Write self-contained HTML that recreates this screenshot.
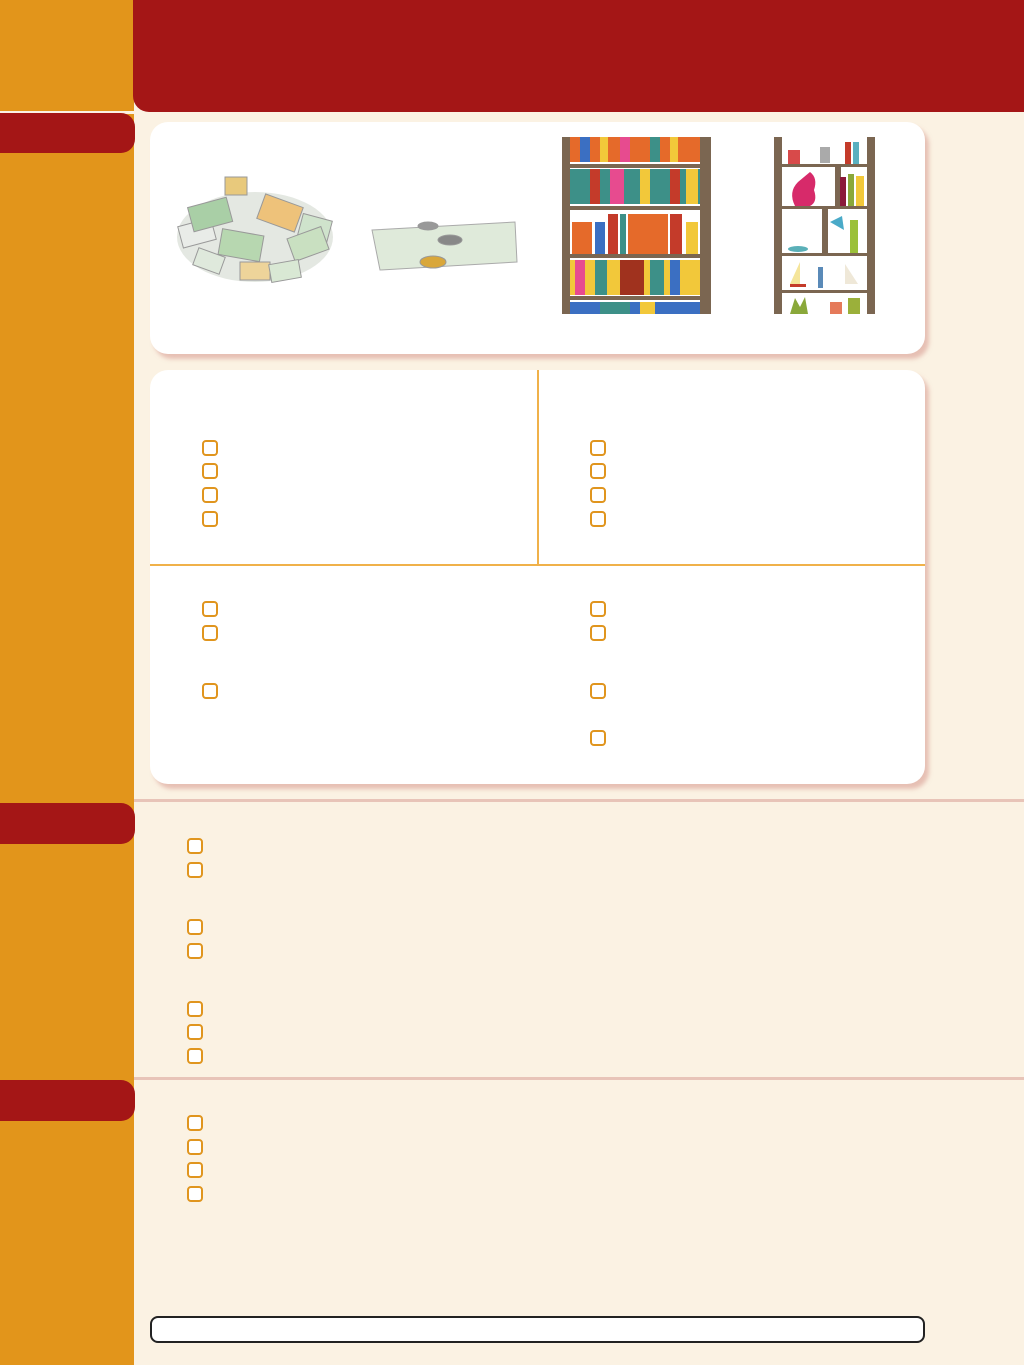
<!DOCTYPE html>
<html><head><meta charset="utf-8"><style>
body{margin:0;width:1024px;height:1365px;background:#fbf2e3;position:relative;overflow:hidden;font-family:"Liberation Sans",sans-serif}
.a{position:absolute}
.cb{position:absolute;width:12px;height:12px;border:2px solid #e0951e;border-radius:4px;background:#fff}
.card{position:absolute;background:#fff;border-radius:18px;box-shadow:4px 5px 4px rgba(214,150,140,.55)}
.sep{position:absolute;left:134px;width:890px;height:3px;background:#e8c4b8}
</style></head><body>
<div class="a" style="left:0;top:0;width:134px;height:1365px;background:#e2951b"></div>
<div class="a" style="left:133px;top:0;width:891px;height:112px;background:#a41616;border-bottom-left-radius:16px"></div>
<div class="a" style="left:0;top:111px;width:134px;height:3px;background:#fbf2e3"></div>
<div class="a" style="left:0;top:113px;width:135px;height:40px;background:#a41616;border-radius:0 14px 14px 0"></div>
<div class="sep" style="top:799px"></div>
<div class="a" style="left:0;top:803px;width:135px;height:41px;background:#a41616;border-radius:0 14px 14px 0"></div>
<div class="sep" style="top:1077px"></div>
<div class="a" style="left:0;top:1080px;width:135px;height:41px;background:#a41616;border-radius:0 14px 14px 0"></div>

<div class="card" style="left:150px;top:122px;width:775px;height:232px"></div>
<svg class="a" style="left:150px;top:122px" width="775" height="232">
<g stroke="#999" stroke-width="1">
<ellipse cx="105" cy="115" rx="78" ry="45" fill="#e4e8e2" stroke="none"/>
<rect x="30" y="100" width="34" height="22" fill="#e9ece8" transform="rotate(-15 47 111)"/>
<rect x="150" y="95" width="30" height="22" fill="#cfe3cc" transform="rotate(15 165 106)"/>
<rect x="40" y="80" width="40" height="25" fill="#a9cfa6" transform="rotate(-15 60 92)"/>
<rect x="110" y="78" width="40" height="26" fill="#eec27a" transform="rotate(20 130 91)"/>
<rect x="70" y="110" width="42" height="26" fill="#b7d7b0" transform="rotate(10 90 123)"/>
<rect x="140" y="110" width="36" height="24" fill="#c9e0c1" transform="rotate(-20 158 122)"/>
<rect x="75" y="55" width="22" height="18" fill="#e8c97c"/>
<rect x="90" y="140" width="30" height="18" fill="#eed49a"/>
<rect x="45" y="130" width="28" height="18" fill="#dfe9dc" transform="rotate(20 59 139)"/>
<rect x="120" y="140" width="30" height="18" fill="#d9e8d4" transform="rotate(-10 135 149)"/>
<polygon points="222,108 365,100 367,140 230,148" fill="#dfeada" stroke="#aaa"/>
<ellipse cx="278" cy="104" rx="10" ry="4" fill="#999"/>
<ellipse cx="300" cy="118" rx="12" ry="5" fill="#888"/>
<ellipse cx="283" cy="140" rx="13" ry="6" fill="#d9a73a"/>
</g>
<rect x="412" y="15" width="149" height="177" fill="#7b6651"/>
<rect x="420" y="15" width="130" height="177" fill="#fff"/>
<g>
<rect x="420" y="15" width="130" height="25" fill="#e56a2a"/><rect x="430" y="15" width="10" height="25" fill="#3b6fc2"/><rect x="450" y="15" width="8" height="25" fill="#f2c83a"/><rect x="470" y="15" width="10" height="25" fill="#e74b8f"/><rect x="500" y="15" width="10" height="25" fill="#3d9088"/><rect x="520" y="15" width="8" height="25" fill="#f2c83a"/>
<rect x="420" y="47" width="130" height="35" fill="#3d9088"/><rect x="440" y="47" width="10" height="35" fill="#c43b2a"/><rect x="460" y="47" width="14" height="35" fill="#e74b8f"/><rect x="490" y="47" width="10" height="35" fill="#f2c83a"/><rect x="520" y="47" width="10" height="35" fill="#c43b2a"/><rect x="536" y="47" width="12" height="35" fill="#f2c83a"/>
<rect x="420" y="92" width="130" height="40" fill="#fff"/><rect x="422" y="100" width="20" height="32" fill="#e56a2a"/><rect x="445" y="100" width="10" height="32" fill="#3b6fc2"/><rect x="458" y="92" width="10" height="40" fill="#c43b2a"/><rect x="470" y="92" width="6" height="40" fill="#3d9088"/><rect x="478" y="92" width="40" height="40" fill="#e56a2a"/><rect x="520" y="92" width="12" height="40" fill="#c43b2a"/><rect x="536" y="100" width="12" height="32" fill="#f2c83a"/>
<rect x="420" y="138" width="130" height="35" fill="#f2c83a"/><rect x="425" y="138" width="10" height="35" fill="#e74b8f"/><rect x="445" y="138" width="12" height="35" fill="#3d9088"/><rect x="470" y="138" width="24" height="35" fill="#a0321e"/><rect x="500" y="138" width="14" height="35" fill="#3d9088"/><rect x="520" y="138" width="10" height="35" fill="#3b6fc2"/>
<rect x="420" y="180" width="130" height="12" fill="#3b6fc2"/><rect x="450" y="180" width="30" height="12" fill="#3d9088"/><rect x="490" y="180" width="15" height="12" fill="#f2c83a"/>
</g>
<g fill="#7b6651"><rect x="420" y="42" width="130" height="4"/><rect x="420" y="84" width="130" height="4"/><rect x="420" y="132" width="130" height="4"/><rect x="420" y="174" width="130" height="4"/></g>
<rect x="624" y="15" width="101" height="177" fill="#fff"/>
<g fill="#7b6651"><rect x="624" y="15" width="8" height="177"/><rect x="717" y="15" width="8" height="177"/><rect x="632" y="42" width="85" height="3"/><rect x="632" y="84" width="85" height="3"/><rect x="632" y="131" width="85" height="3"/><rect x="632" y="168" width="85" height="3"/><rect x="685" y="45" width="6" height="40"/><rect x="672" y="87" width="6" height="44"/></g>
<rect x="638" y="28" width="12" height="14" fill="#d84a4a"/><rect x="670" y="25" width="10" height="16" fill="#aaa"/><rect x="695" y="20" width="6" height="22" fill="#c43b2a"/><rect x="703" y="20" width="6" height="22" fill="#5ab0c0"/>
<path d="M660 50 Q668 56 664 68 Q668 80 660 84 L645 84 Q638 70 648 60 Z" fill="#d72a6a"/>
<rect x="690" y="55" width="6" height="29" fill="#8b1a3a"/><rect x="698" y="52" width="6" height="32" fill="#8aa83a"/><rect x="706" y="54" width="8" height="30" fill="#f2c83a"/>
<path d="M680 100 L692 94 L694 108 Z" fill="#4aaac8"/><rect x="700" y="98" width="8" height="33" fill="#9bc03a"/><ellipse cx="648" cy="127" rx="10" ry="3" fill="#5ab0b8"/>
<path d="M650 140 L650 162 L640 162 Z" fill="#f5e59a"/><rect x="640" y="162" width="16" height="3" fill="#c43b2a"/><path d="M695 142 L695 162 L708 162 Z" fill="#efe8d8"/><rect x="668" y="145" width="5" height="21" fill="#5a8ab8"/>
<rect x="680" y="180" width="12" height="12" fill="#e57a5a"/><rect x="698" y="176" width="12" height="16" fill="#9bb03a"/><path d="M640 192 L645 176 L650 185 L655 175 L658 192Z" fill="#8aa83a"/>
</svg>

<div class="card" style="left:150px;top:370px;width:775px;height:414px"></div>
<div class="a" style="left:537px;top:370px;width:2px;height:195px;background:#f0b14a"></div>
<div class="a" style="left:150px;top:564px;width:775px;height:2px;background:#f0b14a"></div>

<div class="cb" style="left:202px;top:440px"></div><div class="cb" style="left:202px;top:463px"></div><div class="cb" style="left:202px;top:487px"></div><div class="cb" style="left:202px;top:511px"></div>
<div class="cb" style="left:590px;top:440px"></div><div class="cb" style="left:590px;top:463px"></div><div class="cb" style="left:590px;top:487px"></div><div class="cb" style="left:590px;top:511px"></div>
<div class="cb" style="left:202px;top:601px"></div><div class="cb" style="left:202px;top:625px"></div><div class="cb" style="left:202px;top:683px"></div>
<div class="cb" style="left:590px;top:601px"></div><div class="cb" style="left:590px;top:625px"></div><div class="cb" style="left:590px;top:683px"></div><div class="cb" style="left:590px;top:730px"></div>

<div class="cb" style="left:187px;top:838px"></div><div class="cb" style="left:187px;top:862px"></div><div class="cb" style="left:187px;top:919px"></div><div class="cb" style="left:187px;top:943px"></div><div class="cb" style="left:187px;top:1001px"></div><div class="cb" style="left:187px;top:1024px"></div><div class="cb" style="left:187px;top:1048px"></div>
<div class="cb" style="left:187px;top:1115px"></div><div class="cb" style="left:187px;top:1139px"></div><div class="cb" style="left:187px;top:1162px"></div><div class="cb" style="left:187px;top:1186px"></div>

<div class="a" style="left:150px;top:1316px;width:771px;height:23px;border:2px solid #222;border-radius:8px;background:#fff"></div>
</body></html>
